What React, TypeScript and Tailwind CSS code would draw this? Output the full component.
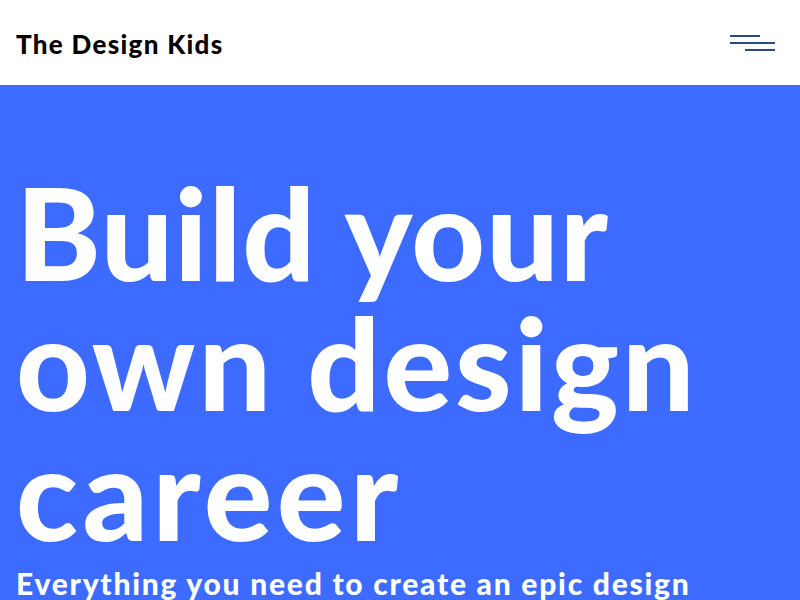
export default function App() {
  return (
    <div className="min-h-screen bg-[#3d6bff]" style={{ fontFamily: 'Lato, "Noto Sans", sans-serif' }}>
      <header className="h-[85px] bg-white flex items-center justify-between pl-4 pr-[25px]">
        <div className="text-[26px] font-black text-black tracking-[1.3px] leading-none pt-[2px]">The Design Kids</div>
        <button className="w-[45px] h-[16px] flex flex-col justify-between" aria-label="Menu">
          <span className="block h-[2px] w-[30px] bg-[#2b4a7d]" />
          <span className="block h-[2px] w-[45px] bg-[#2b4a7d]" />
          <span className="block h-[2px] w-[30px] ml-[15px] bg-[#2b4a7d]" />
        </button>
      </header>
      <section className="px-4 pt-[82px] text-white">
        <h1 className="text-[128px] font-black leading-[130px]">
          <span className="block tracking-[1px]">Build your</span>
          <span className="block tracking-[3px]">own design</span>
          <span className="block tracking-[4.5px]">career</span>
        </h1>
        <p className="mt-[8px] text-[30px] font-black leading-[36px] tracking-[1.75px]">Everything you need to create an epic design</p>
      </section>
    </div>
  )
}
